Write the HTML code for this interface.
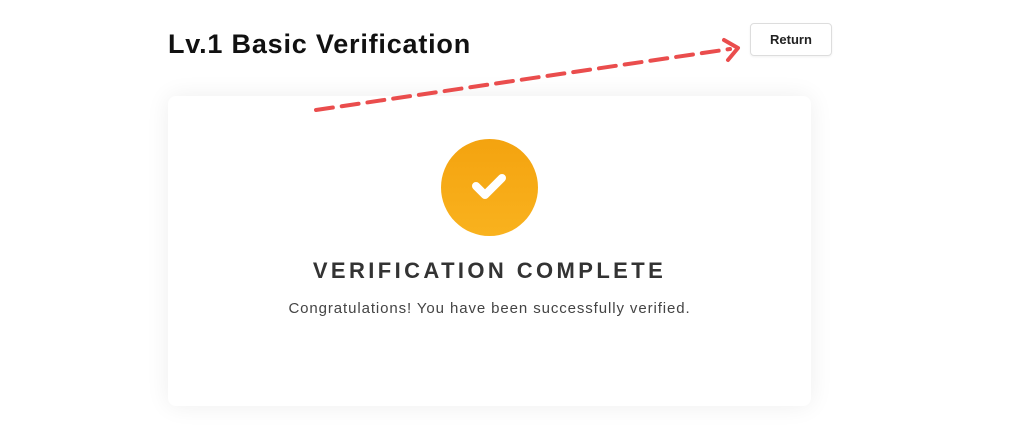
<!DOCTYPE html>
<html><head><style>
body{margin:0;width:1024px;height:437px;background:#fff;position:relative;overflow:hidden;font-family:"Liberation Sans",sans-serif}
.title{position:absolute;left:168px;top:29px;font-size:27px;font-weight:bold;color:#111;letter-spacing:0.8px}
.btn{position:absolute;left:750px;top:23px;width:82px;height:33px;border:1px solid #ddd;border-radius:4px;box-sizing:border-box;font-size:13px;font-weight:bold;color:#222;text-align:center;line-height:31px;box-shadow:0 1px 2px rgba(0,0,0,.06)}
.card{position:absolute;left:168px;top:96px;width:643px;height:310px;background:#fff;border-radius:8px;box-shadow:0 0 24px rgba(0,0,0,.07)}
.circle{position:absolute;left:441px;top:139px;width:97px;height:97px;border-radius:50%;background:linear-gradient(#f4a30f,#f9b21e)}
.h{position:absolute;left:0;width:979px;top:258px;text-align:center;font-size:22px;font-weight:bold;letter-spacing:3.4px;color:#333}
.p{position:absolute;left:0;width:979px;top:300px;text-align:center;font-size:15px;letter-spacing:0.9px;color:#444}
</style></head><body>
<div class="title">Lv.1 Basic Verification</div>
<div class="btn">Return</div>
<div class="card"></div>
<div class="circle"></div>
<svg style="position:absolute;left:0;top:0" width="1024" height="437">
<path d="M476 186 L485 195 L502 178" fill="none" stroke="#fff" stroke-width="8" stroke-linecap="round" stroke-linejoin="round"/>
<path d="M316 110 L730 49" stroke="#ea4d4d" stroke-width="4" stroke-dasharray="17 9" stroke-linecap="round"/>
<path d="M724 40 L738 48 L728 60" fill="none" stroke="#ea4d4d" stroke-width="4" stroke-linecap="round" stroke-linejoin="round"/>
</svg>
<div class="h">VERIFICATION COMPLETE</div>
<div class="p">Congratulations! You have been successfully verified.</div>
</body></html>
